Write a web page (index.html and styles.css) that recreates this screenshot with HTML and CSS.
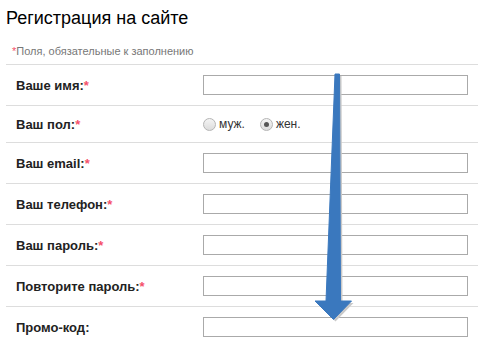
FILE: index.html
```html
<!DOCTYPE html>
<html lang="ru">
<head>
  <meta charset="UTF-8">
  <title>Регистрация на сайте</title>
  <link rel="stylesheet" href="styles.css">
</head>
<body>
  <div class="page">
    <h1 class="title">Регистрация на сайте</h1>
    <div class="note"><span class="req">*</span>Поля, обязательные к заполнению</div>

    <form class="form">
      <div class="row">
        <label>Ваше имя:<span class="req">*</span></label>
        <input type="text">
      </div>
      <div class="row row-radio">
        <label>Ваш пол:<span class="req">*</span></label>
        <div class="radios">
          <label class="opt"><input type="radio" name="sex"> муж.</label>
          <label class="opt"><input type="radio" name="sex" checked> жен.</label>
        </div>
      </div>
      <div class="row">
        <label>Ваш email:<span class="req">*</span></label>
        <input type="text">
      </div>
      <div class="row">
        <label>Ваш телефон:<span class="req">*</span></label>
        <input type="text">
      </div>
      <div class="row">
        <label>Ваш пароль:<span class="req">*</span></label>
        <input type="password">
      </div>
      <div class="row">
        <label>Повторите пароль:<span class="req">*</span></label>
        <input type="password">
      </div>
      <div class="row">
        <label>Промо-код:</label>
        <input type="text">
      </div>
    </form>

    <svg class="arrow" width="495" height="343" viewBox="0 0 495 343">
      <polygon points="336,75 340.5,75 341.5,302 352.5,302 334.5,320.5 316,302 327,302" fill="#c9c9c9" transform="translate(1,1)"/>
      <polygon points="335,74 339.5,74 340.5,301 351.5,301 333.5,319.5 315,301 326,301" fill="#3a78be" stroke="#3a78be" stroke-width="1" stroke-linejoin="round"/>
    </svg>
  </div>
</body>
</html>
```

FILE: styles.css
```css
html, body {
  margin: 0;
  padding: 0;
  background: #fff;
  font-family: 'Liberation Sans', Arial, sans-serif;
  overflow: hidden;
}
.page {
  width: 472px;
  padding-left: 6px;
}
.title {
  margin: 7px 0 0;
  font-size: 18px;
  line-height: 22px;
  font-weight: normal;
  color: #000;
}
.note {
  margin-top: 15px;
  padding: 0 0 6px 6px;
  font-size: 11px;
  line-height: 14px;
  color: #777;
  border-bottom: 1px solid #ddd;
}
.req {
  color: #f5506a;
}
.form {
  margin: 0;
}
.row {
  display: grid;
  grid-template-columns: 187px 265px;
  align-items: center;
  padding: 10px 10px;
  border-bottom: 1px solid #ddd;
}
.row > label {
  font-size: 13px;
  font-weight: bold;
  color: #222;
}
.row input[type=text],
.row input[type=password] {
  box-sizing: border-box;
  width: 265px;
  height: 20px;
  margin: 0;
  border: 1px solid #aaa;
  background: #fff;
}
.row-radio {
  padding: 10px 10px;
}
.radios {
  display: flex;
  gap: 15px;
  height: 16px;
  align-items: center;
}
.opt {
  display: flex;
  align-items: center;
  gap: 3px;
  font-size: 12px;
  color: #333;
}
.opt input {
  appearance: none;
  -webkit-appearance: none;
  margin: 0;
  width: 13px;
  height: 13px;
  border-radius: 50%;
  border: 1px solid #b5b5b5;
  background: linear-gradient(#f4f4f4, #dcdcdc);
  box-sizing: border-box;
  position: relative;
}
.opt input:checked::after {
  content: '';
  position: absolute;
  left: 3px;
  top: 3px;
  width: 5px;
  height: 5px;
  border-radius: 50%;
  background: #555;
}
.arrow {
  position: absolute;
  left: 0;
  top: 0;
  pointer-events: none;
}
```
